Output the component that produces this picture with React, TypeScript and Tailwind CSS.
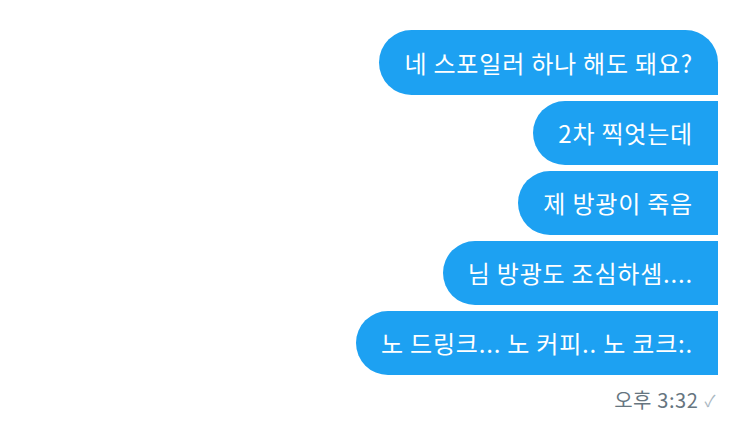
const messages = [
  "네 스포일러 하나 해도 돼요?",
  "2차 찍엇는데",
  "제 방광이 죽음",
  "님 방광도 조심하셈....",
  "노 드링크... 노 커피.. 노 코크:.",
];

export default function App() {
  return (
    <div
      className="w-[750px] h-[422px] bg-white pt-[30px] pr-[32px] flex flex-col items-end"
      style={{ fontFamily: '"Noto Sans CJK KR", "Noto Sans", sans-serif' }}
    >
      <div className="flex flex-col items-end gap-[6px]">
        {messages.map((m, i) => (
          <div
            key={i}
            className={
              i === 0
                ? "h-[65px] flex items-center bg-[#1da1f2] text-white text-[24px] tracking-[0.8px] px-[25px] rounded-l-[33px] rounded-tr-[33px]"
                : "h-[64px] flex items-center bg-[#1da1f2] text-white text-[24px] tracking-[0.8px] px-[25px] rounded-l-[33px]"
            }
          >
            {m}
          </div>
        ))}
      </div>
      <div className="mt-[10px] mr-[2px] flex items-center gap-[6px] text-[20px] tracking-[0.6px] text-[#66757f]">
        <span>오후 3:32</span>
        <span className="text-[16px] text-[#aab8c2]">✓</span>
      </div>
    </div>
  );
}
